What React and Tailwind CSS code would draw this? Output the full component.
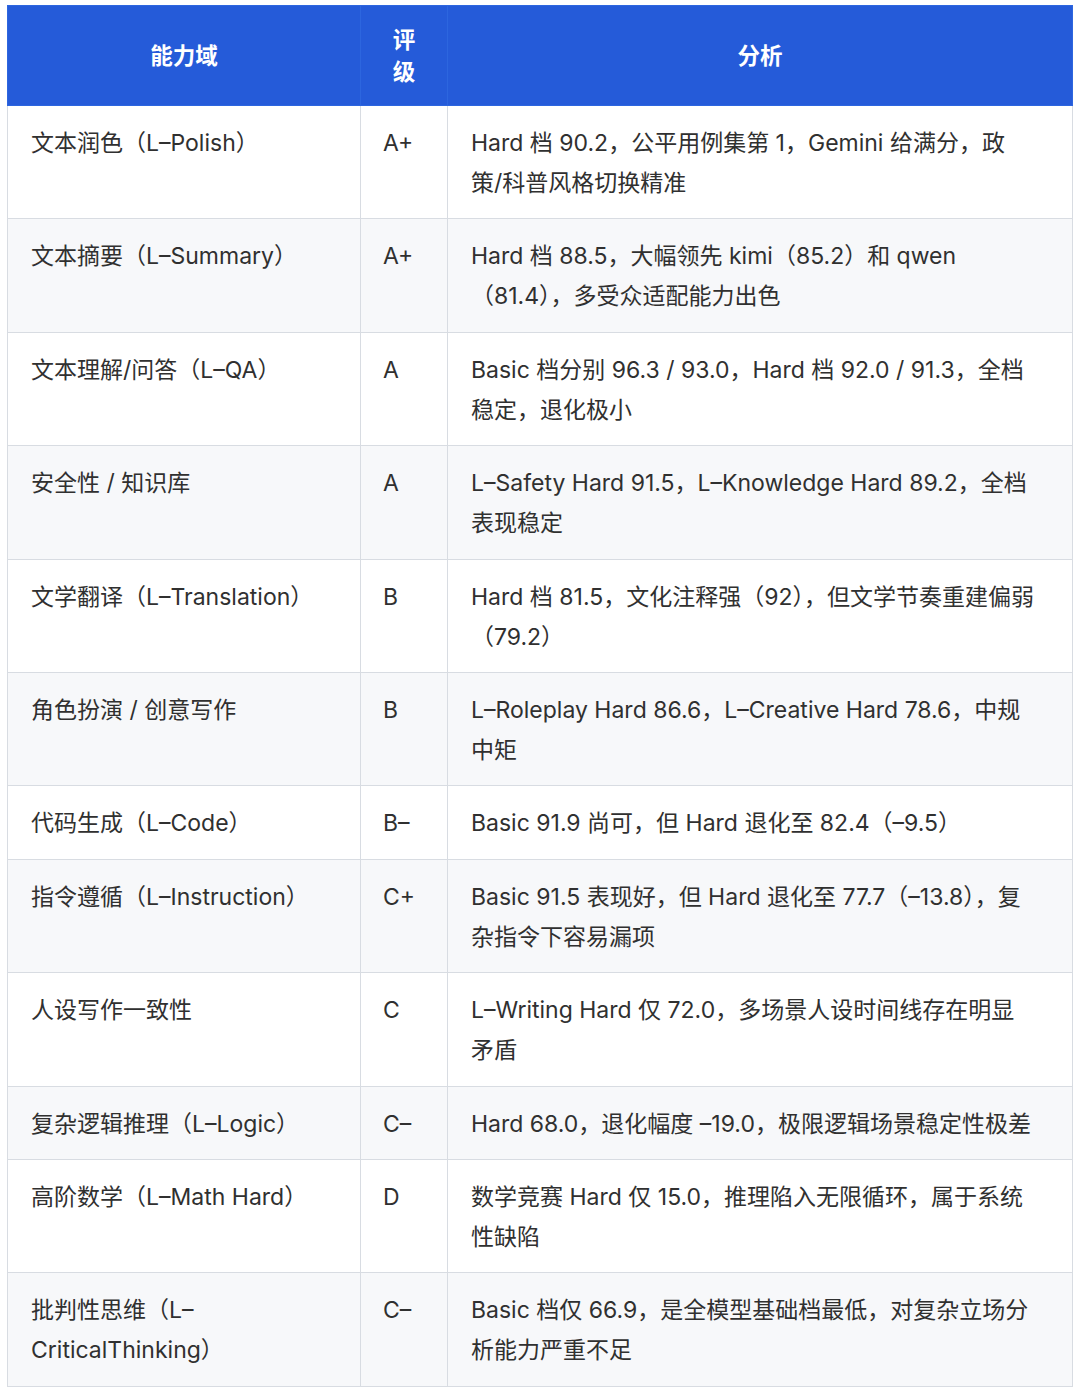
const rows = [
  [['文本润色（L–Polish）'], 'A+', ['Hard 档 90.2，公平用例集第 1，Gemini 给满分，政', '策/科普风格切换精准']],
  [['文本摘要（L–Summary）'], 'A+', ['Hard 档 88.5，大幅领先 kimi（85.2）和 qwen', '（81.4），多受众适配能力出色']],
  [['文本理解/问答（L–QA）'], 'A', ['Basic 档分别 96.3 / 93.0，Hard 档 92.0 / 91.3，全档', '稳定，退化极小']],
  [['安全性 / 知识库'], 'A', ['L–Safety Hard 91.5，L–Knowledge Hard 89.2，全档', '表现稳定']],
  [['文学翻译（L–Translation）'], 'B', ['Hard 档 81.5，文化注释强（92），但文学节奏重建偏弱', '（79.2）']],
  [['角色扮演 / 创意写作'], 'B', ['L–Roleplay Hard 86.6，L–Creative Hard 78.6，中规', '中矩']],
  [['代码生成（L–Code）'], 'B–', ['Basic 91.9 尚可，但 Hard 退化至 82.4（–9.5）']],
  [['指令遵循（L–Instruction）'], 'C+', ['Basic 91.5 表现好，但 Hard 退化至 77.7（–13.8），复', '杂指令下容易漏项']],
  [['人设写作一致性'], 'C', ['L–Writing Hard 仅 72.0，多场景人设时间线存在明显', '矛盾']],
  [['复杂逻辑推理（L–Logic）'], 'C–', ['Hard 68.0，退化幅度 –19.0，极限逻辑场景稳定性极差']],
  [['高阶数学（L–Math Hard）'], 'D', ['数学竞赛 Hard 仅 15.0，推理陷入无限循环，属于系统', '性缺陷']],
  [['批判性思维（L–', 'CriticalThinking）'], 'C–', ['Basic 档仅 66.9，是全模型基础档最低，对复杂立场分', '析能力严重不足']],
];

const Lines = ({ lines }) => (
  <>
    {lines.map((l, i) => (
      <div key={i} className="whitespace-nowrap">{l}</div>
    ))}
  </>
);

const App = () => {
  return (
    <div
      className="bg-white w-[1080px] min-h-[1396px] pt-[5px] pl-[7px]"
      style={{ fontFamily: '"Inter", "Noto Sans CJK SC", sans-serif' }}
    >
      <table className="w-[1065px] border-collapse table-fixed text-[23px] leading-[40px] text-[#303030]">
        <colgroup>
          <col className="w-[353px]" />
          <col className="w-[87px]" />
          <col className="w-[625px]" />
        </colgroup>
        <thead>
          <tr className="bg-[#255bd9] text-white h-[100px] text-[22.5px]">
            <th className="border border-[#2d66df] px-[22px] leading-[32px] font-bold">能力域</th>
            <th className="border border-[#2d66df] px-[22px] leading-[32px] font-bold">评级</th>
            <th className="border border-[#2d66df] px-[22px] leading-[32px] font-bold">分析</th>
          </tr>
        </thead>
        <tbody>
          {rows.map((r, i) => (
            <tr key={i} className={i % 2 === 1 ? 'bg-[#f7f8fa]' : 'bg-white'}>
              <td className="border border-[#d8dce2] align-top pl-[23px] pr-[10px] pt-[17px] pb-[15.4px]">
                <Lines lines={r[0]} />
              </td>
              <td className="border border-[#d8dce2] align-top pl-[22px] pr-[10px] pt-[17px] pb-[15.4px]">{r[1]}</td>
              <td className="border border-[#d8dce2] align-top pl-[23px] pr-[10px] pt-[17px] pb-[15.4px]">
                <Lines lines={r[2]} />
              </td>
            </tr>
          ))}
        </tbody>
      </table>
    </div>
  );
};

export default App;
